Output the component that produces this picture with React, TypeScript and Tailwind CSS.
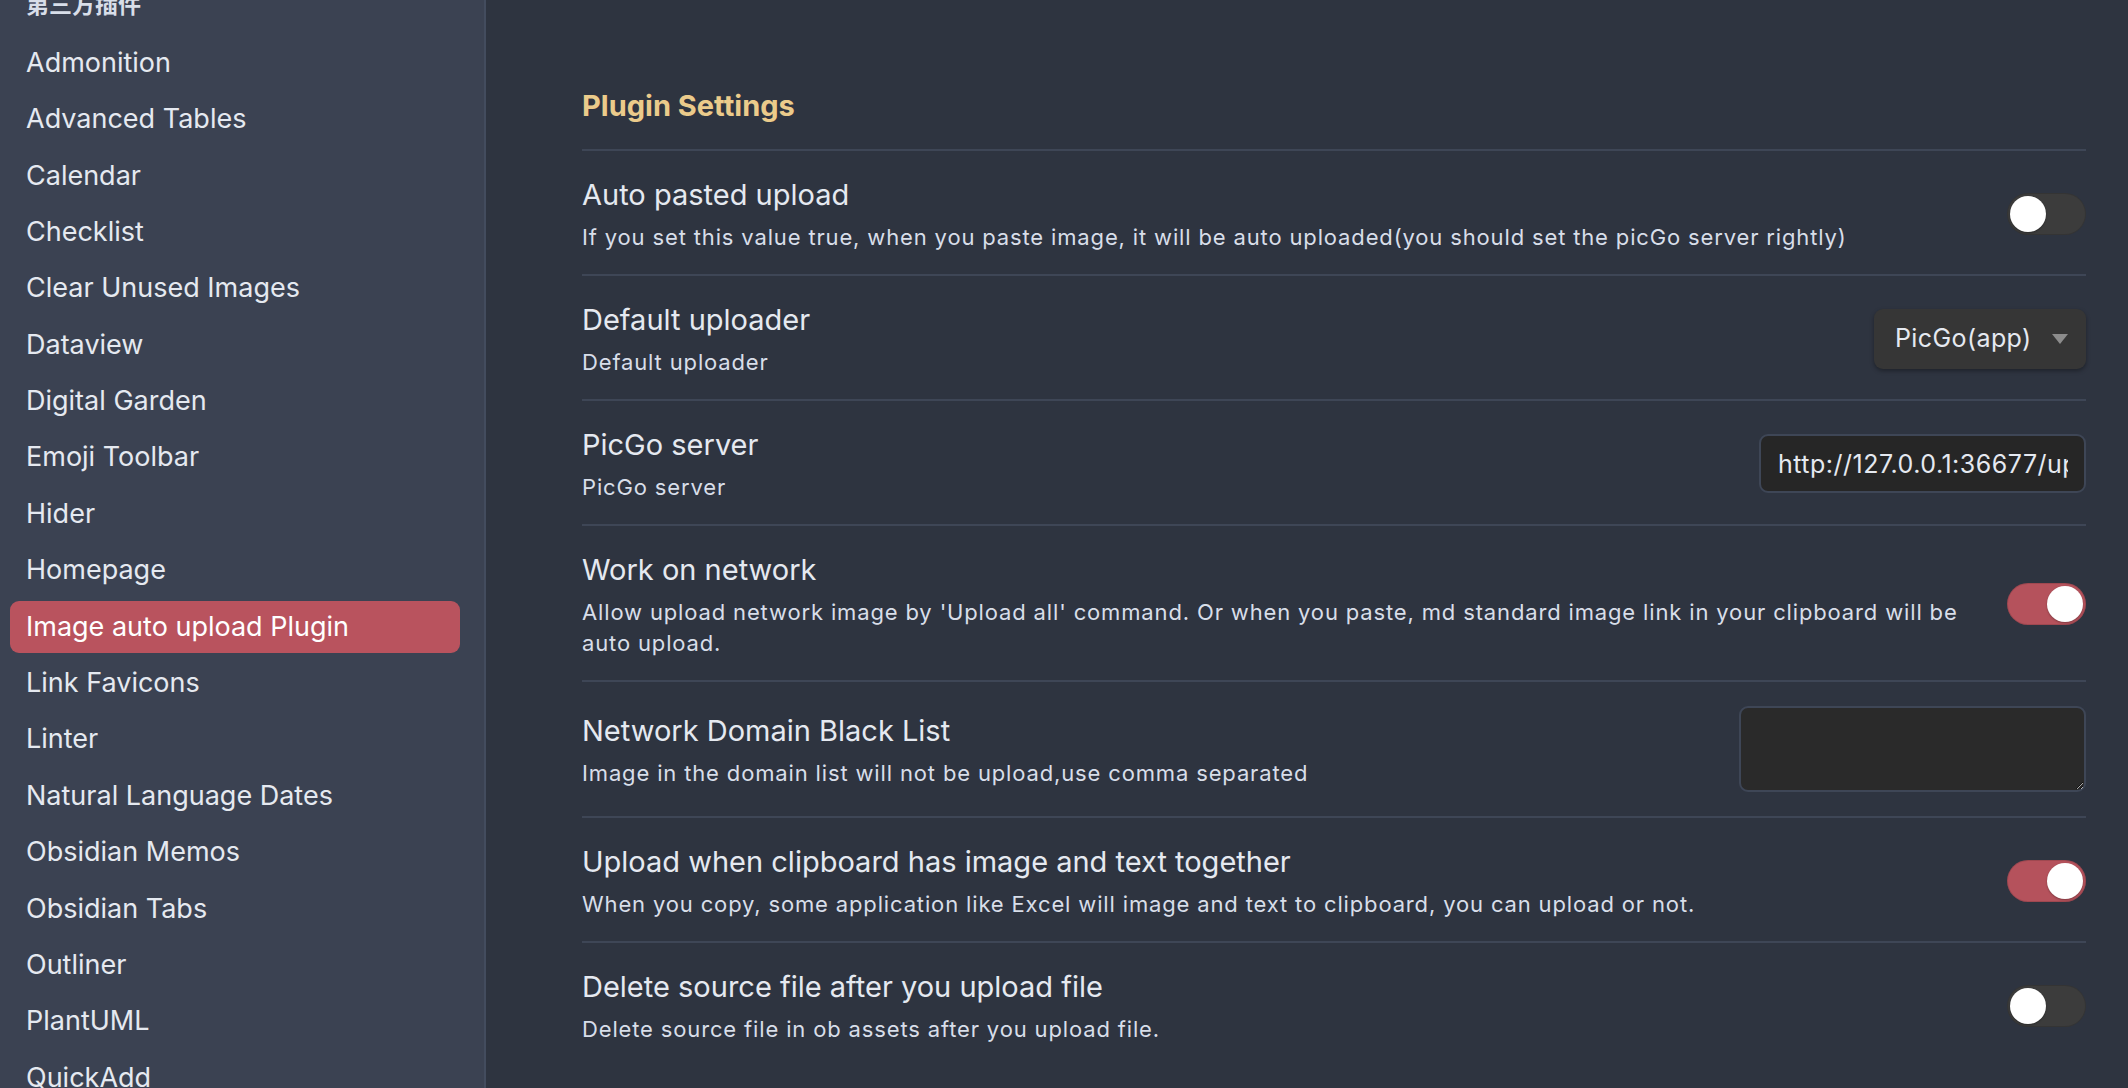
import React from "react";

const plugins = [
  "Admonition",
  "Advanced Tables",
  "Calendar",
  "Checklist",
  "Clear Unused Images",
  "Dataview",
  "Digital Garden",
  "Emoji Toolbar",
  "Hider",
  "Homepage",
  "Image auto upload Plugin",
  "Link Favicons",
  "Linter",
  "Natural Language Dates",
  "Obsidian Memos",
  "Obsidian Tabs",
  "Outliner",
  "PlantUML",
  "QuickAdd",
];

function Toggle({ on }: { on: boolean }) {
  return (
    <div
      className={
        "relative h-[42px] w-[79px] shrink-0 rounded-full shadow-[inset_0_0_0_1px_rgba(0,0,0,0.12)] " +
        (on ? "bg-[#b5525c]" : "bg-[#3c3c3c]")
      }
    >
      <div
        className={
          "absolute top-[3px] h-[36px] w-[36px] rounded-full bg-white shadow-[0_1px_2px_rgba(0,0,0,0.3)] " +
          (on ? "right-[3px]" : "left-[3px]")
        }
      />
    </div>
  );
}

function Row({
  name,
  desc,
  children,
  pad = "pt-[23px] pb-[21px]",
}: {
  name: string;
  desc: string;
  children: React.ReactNode;
  pad?: string;
}) {
  return (
    <div className={"flex items-center border-t-2 border-[#3e4656] " + pad}>
      <div className="mr-[24px] min-w-0 flex-1">
        <div className="text-[29px] leading-[42px] text-[#e5e9f0]">{name}</div>
        <div className="mt-[6px] text-[22px] leading-[31px] tracking-[0.85px] text-[#d8dee9]">{desc}</div>
      </div>
      <div className="flex shrink-0 items-center">{children}</div>
    </div>
  );
}

export default function App() {
  return (
    <div
      className="flex h-[1088px] w-[2128px] overflow-hidden bg-[#2e3440]"
      style={{ fontFamily: "Inter, 'Noto Sans CJK SC', sans-serif" }}
    >
      {/* Sidebar */}
      <div className="flex h-full w-[486px] shrink-0 flex-col border-r-2 border-[#434c5e] bg-[#3b4252]">
        <div className="mt-[-11px] h-[32px] pl-[26px] text-[23px] font-semibold leading-[32px] text-[#d8dee9]">
          第三方插件
        </div>
        <div className="mt-[16px] flex flex-col gap-[4.4px] pl-[10px] pr-[24px]">
          {plugins.map((p) => (
            <div
              key={p}
              className={
                "flex h-[52px] shrink-0 items-center rounded-[9px] pl-[16px] text-[27px] " +
                (p === "Image auto upload Plugin" ? "bg-[#b9535e] text-white" : "text-[#e5e9f0]")
              }
            >
              {p}
            </div>
          ))}
        </div>
      </div>

      {/* Main */}
      <div className="flex-1 overflow-hidden pl-[96px] pr-[42px] pt-[87px]">
        <div className="mb-[24px] text-[29px] font-bold leading-[38px] text-[#ebcb8b]">Plugin Settings</div>

        <Row
          name="Auto pasted upload"
          desc="If you set this value true, when you paste image, it will be auto uploaded(you should set the picGo server rightly)"
        >
          <Toggle on={false} />
        </Row>

        <Row name="Default uploader" desc="Default uploader">
          <div className="relative flex h-[60px] w-[212px] items-center rounded-[9px] bg-[#363636] pl-[21px] text-[25px] tracking-[0.4px] text-[#e5e9f0] shadow-[0_2px_4px_rgba(0,0,0,0.35)]">
            PicGo(app)
            <svg className="absolute right-[18px] top-[25px]" width="16" height="10" viewBox="0 0 16 10">
              <path d="M0 0 L16 0 L8 10 Z" fill="#8c8c8c" />
            </svg>
          </div>
        </Row>

        <Row name="PicGo server" desc="PicGo server">
          <input
            readOnly
            value="http://127.0.0.1:36677/upload"
            className="h-[59px] w-[327px] rounded-[9px] border-2 border-[#3e4656] bg-[#262626] pl-[17px] pr-[16px] text-[25px] tracking-[0.5px] text-[#e5e9f0] outline-none"
            style={{ fontFamily: "Inter, sans-serif" }}
          />
        </Row>

        <Row
          name="Work on network"
          desc="Allow upload network image by 'Upload all' command. Or when you paste, md standard image link in your clipboard will be auto upload."
        >
          <Toggle on={true} />
        </Row>

        <Row
          name="Network Domain Black List"
          desc="Image in the domain list will not be upload,use comma separated"
          pad="pt-[24px] pb-[24px]"
        >
          <textarea
            readOnly
            className="block h-[86px] w-[347px] rounded-[9px] border-2 border-[#3e4656] bg-[#2a2a2a] text-[22px] text-[#e5e9f0] outline-none"
          />
        </Row>

        <Row
          name="Upload when clipboard has image and text together"
          desc="When you copy, some application like Excel will image and text to clipboard, you can upload or not."
        >
          <Toggle on={true} />
        </Row>

        <Row name="Delete source file after you upload file" desc="Delete source file in ob assets after you upload file.">
          <Toggle on={false} />
        </Row>
      </div>
    </div>
  );
}
